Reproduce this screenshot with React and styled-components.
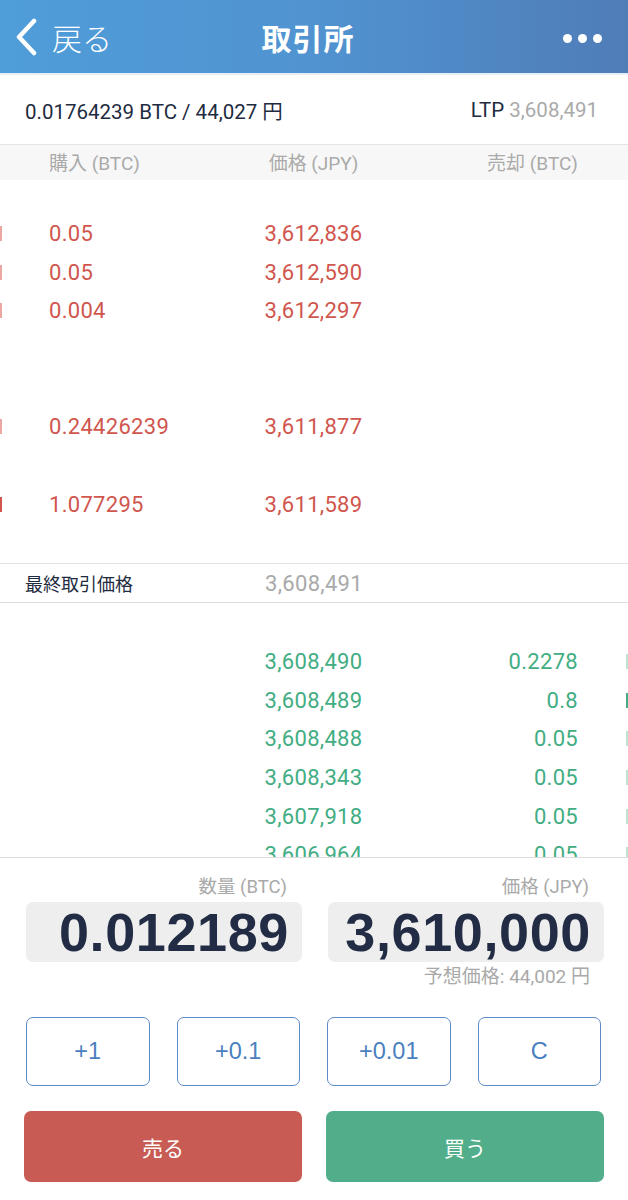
import React from "react";
import styled, { createGlobalStyle } from "styled-components";

const GlobalStyle = createGlobalStyle`
  body {
    margin: 0;
    background: #ffffff;
    font-family: Roboto, "Noto Sans CJK JP", sans-serif;
  }
`;

const Page = styled.div`
  width: 628px;
  height: 1200px;
  overflow: hidden;
  display: flex;
  flex-direction: column;
  background: #fff;
`;

const Header = styled.header`
  height: 75px;
  box-sizing: border-box;
  flex-shrink: 0;
  display: grid;
  grid-template-columns: 1fr auto 1fr;
  align-items: center;
  padding: 0 26px 0 14px;
  background: linear-gradient(90deg, #4f9dd9 0%, #5093d0 50%, #4f7db8 100%);
  border-bottom: 2px solid #e6eef7;
  color: #fff;
`;

const Back = styled.div`
  display: flex;
  align-items: center;
  gap: 14px;
  font-family: "Noto Sans CJK JP", sans-serif;
  font-size: 30px;
  font-weight: 300;
`;

const Title = styled.h1`
  margin: 0;
  font-family: "Noto Sans CJK JP", sans-serif;
  font-size: 30px;
  font-weight: 700;
  letter-spacing: 1px;
`;

const Dots = styled.div`
  justify-self: end;
  display: flex;
  gap: 6px;
  padding-top: 3px;
`;

const Dot = styled.span`
  width: 9px;
  height: 9px;
  border-radius: 50%;
  background: #fff;
`;

const InfoBar = styled.div`
  height: 69px;
  flex-shrink: 0;
  display: flex;
  align-items: center;
  justify-content: space-between;
  padding: 0 30px 0 25px;
  font-size: 20.5px;
  color: #1e2b40;
`;

const Muted = styled.span`
  color: #aaaaaa;
`;

const ColumnHead = styled.div`
  height: 36px;
  box-sizing: border-box;
  flex-shrink: 0;
  display: grid;
  grid-template-columns: 1fr 1fr 1fr;
  align-items: center;
  padding: 0 50px 3px 49px;
  border-top: 1px solid #e4e4e4;
  background: #f7f7f7;
  font-size: 19px;
  color: #aaaaaa;
`;

const Cell = styled.span`
  text-align: ${(p) => p.$align || "left"};
  white-space: nowrap;
`;

const AskList = styled.div`
  height: 383px;
  flex-shrink: 0;
  padding-top: 34px;
  box-sizing: border-box;
`;

const BidList = styled.div`
  height: 254px;
  flex-shrink: 0;
  overflow: hidden;
  padding-top: 39px;
  box-sizing: border-box;
`;

const Row = styled.div`
  position: relative;
  height: 38.7px;
  display: grid;
  grid-template-columns: 1fr 1fr 1fr;
  align-items: center;
  padding: 0 50px 0 49px;
  font-size: 22px;
  letter-spacing: 0.3px;
  color: ${(p) => (p.$side === "ask" ? "#d0564e" : "#42ad83")};
`;

const Depth = styled.span`
  position: absolute;
  top: 12px;
  height: 15px;
  ${(p) => (p.$side === "ask" ? "left: 0;" : "right: 0;")}
  background: ${(p) => p.$color};
`;

const LastRow = styled.div`
  height: 40px;
  box-sizing: border-box;
  flex-shrink: 0;
  display: grid;
  grid-template-columns: 1fr 1fr 1fr;
  align-items: center;
  padding: 0 25px;
  border-top: 1px solid #e2e2e2;
  border-bottom: 1px solid #dedede;
  font-size: 18px;
  color: #1e2b40;
`;

const LastPrice = styled.span`
  text-align: center;
  font-size: 22px;
  letter-spacing: 0.3px;
  color: #a9a9a9;
`;

const Panel = styled.div`
  flex: 1;
  border-top: 1px solid #dddddd;
  padding: 0 24px 0 26px;
`;

const Fields = styled.div`
  display: grid;
  grid-template-columns: 276px 276px;
  gap: 26px;
  margin-top: 19px;
`;

const Field = styled.div`
  display: flex;
  flex-direction: column;
  align-items: stretch;
`;

const Label = styled.div`
  height: 20px;
  line-height: 20px;
  text-align: right;
  padding-right: 15px;
  font-size: 18.5px;
  color: #a9a9a9;
  margin-bottom: 5px;
`;

const Value = styled.div`
  height: 60px;
  border-radius: 7px;
  background: #eeeeee;
  display: flex;
  align-items: center;
  justify-content: flex-end;
  padding-right: 13px;
  font-family: "Liberation Sans", Arial, sans-serif;
  font-size: 54px;
  font-weight: 700;
  color: #222d45;
  letter-spacing: 0.6px;
`;

const Estimate = styled.div`
  margin-top: 4px;
  line-height: 22px;
  text-align: right;
  padding-right: 14px;
  font-size: 19px;
  color: #a9a9a9;
`;

const Steps = styled.div`
  display: grid;
  grid-template-columns: repeat(4, 1fr);
  gap: 27px;
  margin: 29px 3px 0 0;
`;

const StepButton = styled.button`
  height: 69px;
  border: 1.5px solid #5b8ac6;
  border-radius: 7px;
  background: #fff;
  font-family: "Liberation Sans", Arial, sans-serif;
  font-size: 23.5px;
  color: #4b80c0;
`;

const Actions = styled.div`
  display: grid;
  grid-template-columns: 278px 278px;
  gap: 24px;
  margin: 25px 0 0 -2px;
`;

const ActionButton = styled.button`
  height: 71px;
  border: none;
  border-radius: 7px;
  background: ${(p) => p.$bg};
  font-family: "Noto Sans CJK JP", sans-serif;
  font-size: 21px;
  color: #fff;
`;

const asks = [
  { amount: "0.05", price: "3,612,836", depth: 2, color: "#eaa7a3" },
  { amount: "0.05", price: "3,612,590", depth: 2, color: "#eaa7a3" },
  { amount: "0.004", price: "3,612,297", depth: 2, color: "#eaa7a3" },
  { amount: "", price: "" },
  { amount: "", price: "" },
  { amount: "0.24426239", price: "3,611,877", depth: 2, color: "#eaa7a3" },
  { amount: "", price: "" },
  { amount: "1.077295", price: "3,611,589", depth: 2, color: "#d0564e" },
];

const bids = [
  { price: "3,608,490", amount: "0.2278", depth: 2, color: "#bfe3d2" },
  { price: "3,608,489", amount: "0.8", depth: 2, color: "#42ad83" },
  { price: "3,608,488", amount: "0.05", depth: 2, color: "#bfe3d2" },
  { price: "3,608,343", amount: "0.05", depth: 2, color: "#bfe3d2" },
  { price: "3,607,918", amount: "0.05", depth: 2, color: "#bfe3d2" },
  { price: "3,606,964", amount: "0.05", depth: 2, color: "#bfe3d2" },
];

const ChevronLeft = () => (
  <svg width="24" height="38" viewBox="0 0 24 38">
    <path
      d="M20 3 L5 19 L20 35"
      fill="none"
      stroke="#fff"
      strokeWidth="4.5"
      strokeLinecap="round"
      strokeLinejoin="round"
    />
  </svg>
);

const App = () => {
  return (
    <Page>
      <GlobalStyle />
      <Header>
        <Back>
          <ChevronLeft />
          戻る
        </Back>
        <Title>取引所</Title>
        <Dots>
          <Dot />
          <Dot />
          <Dot />
        </Dots>
      </Header>

      <InfoBar>
        <span>0.01764239 BTC / 44,027 円</span>
        <span>
          LTP <Muted>3,608,491</Muted>
        </span>
      </InfoBar>

      <ColumnHead>
        <Cell>購入 (BTC)</Cell>
        <Cell $align="center">価格 (JPY)</Cell>
        <Cell $align="right">売却 (BTC)</Cell>
      </ColumnHead>

      <AskList>
        {asks.map((a, i) => (
          <Row key={i} $side="ask">
            {a.depth && (
              <Depth $side="ask" $color={a.color} style={{ width: a.depth }} />
            )}
            <Cell>{a.amount}</Cell>
            <Cell $align="center">{a.price}</Cell>
            <Cell />
          </Row>
        ))}
      </AskList>

      <LastRow>
        <span>最終取引価格</span>
        <LastPrice>3,608,491</LastPrice>
        <span />
      </LastRow>

      <BidList>
        {bids.map((b, i) => (
          <Row key={i} $side="bid">
            <Depth $side="bid" $color={b.color} style={{ width: b.depth }} />
            <Cell />
            <Cell $align="center">{b.price}</Cell>
            <Cell $align="right">{b.amount}</Cell>
          </Row>
        ))}
      </BidList>

      <Panel>
        <Fields>
          <Field>
            <Label>数量 (BTC)</Label>
            <Value>0.012189</Value>
          </Field>
          <Field>
            <Label>価格 (JPY)</Label>
            <Value>3,610,000</Value>
            <Estimate>予想価格: 44,002 円</Estimate>
          </Field>
        </Fields>

        <Steps>
          <StepButton>+1</StepButton>
          <StepButton>+0.1</StepButton>
          <StepButton>+0.01</StepButton>
          <StepButton>C</StepButton>
        </Steps>

        <Actions>
          <ActionButton $bg="#c85c55">売る</ActionButton>
          <ActionButton $bg="#52ae8a">買う</ActionButton>
        </Actions>
      </Panel>
    </Page>
  );
};

export default App;
